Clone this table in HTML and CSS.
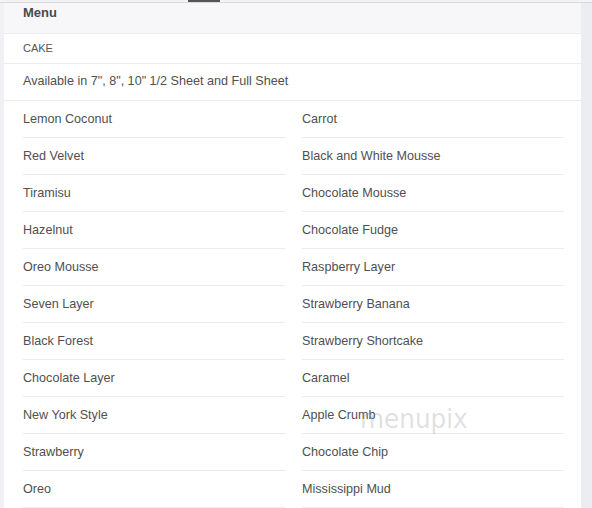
FILE: index.html
```html
<!DOCTYPE html>
<html>
<head>
<meta charset="utf-8">
<link rel="stylesheet" href="styles.css">
</head>
<body>
<div class="page">
  <div class="topbar"><span class="tab-mark"></span></div>
  <div class="main">
    <div class="card">
      <div class="head">Menu</div>
      <div class="section">CAKE</div>
      <div class="desc">Available in 7", 8", 10" 1/2 Sheet and Full Sheet</div>
      <div class="grid">
        <div class="item">Lemon Coconut</div><div class="item">Carrot</div>
        <div class="item">Red Velvet</div><div class="item">Black and White Mousse</div>
        <div class="item">Tiramisu</div><div class="item">Chocolate Mousse</div>
        <div class="item">Hazelnut</div><div class="item">Chocolate Fudge</div>
        <div class="item">Oreo Mousse</div><div class="item">Raspberry Layer</div>
        <div class="item">Seven Layer</div><div class="item">Strawberry Banana</div>
        <div class="item">Black Forest</div><div class="item">Strawberry Shortcake</div>
        <div class="item">Chocolate Layer</div><div class="item">Caramel</div>
        <div class="item">New York Style</div><div class="item">Apple Crumb</div>
        <div class="item">Strawberry</div><div class="item">Chocolate Chip</div>
        <div class="item">Oreo</div><div class="item">Mississippi Mud</div>
      </div>
    </div>
    <div class="scroll"></div>
  </div>
  <div class="watermark">menupix</div>
</div>
</body>
</html>
```
FILE: styles.css
```css
html, body { margin: 0; padding: 0; }
body {
  font-family: "Liberation Sans", Arial, sans-serif;
  background: #f1f1f4;
  color: #505050;
  width: 592px;
  height: 508px;
  overflow: hidden;
}
.page { position: relative; width: 592px; height: 508px; }
.topbar {
  height: 2px;
  border-bottom: 1px solid #d8d8de;
  background: #f3f3f6;
  position: relative;
}
.tab-mark {
  position: absolute;
  left: 188px;
  top: 0;
  width: 32px;
  height: 2px;
  background: #555;
}
.main { display: flex; padding-left: 4px; }
.card { width: 577px; background: #fff; }
.scroll { flex: 1; background: #ececf3; }
.head {
  height: 31px;
  background: #f7f7fa;
  border-bottom: 1px solid #ececf0;
  font-weight: bold;
  font-size: 13px;
  color: #4a4a4a;
  padding-left: 19px;
  line-height: 19px;
  box-sizing: border-box;
}
.section {
  height: 30px;
  font-size: 11px;
  color: #555;
  padding-left: 19px;
  line-height: 28px;
  border-bottom: 1px solid #ececf0;
  box-sizing: border-box;
}
.desc {
  height: 37px;
  font-size: 12.6px;
  color: #505050;
  padding-left: 19px;
  line-height: 35px;
  border-bottom: 1px solid #ececf0;
  box-sizing: border-box;
}
.grid {
  display: grid;
  grid-template-columns: 262px 262px;
  column-gap: 17px;
  padding: 0 19px;
}
.item {
  height: 37px;
  font-size: 12.6px;
  color: #505050;
  line-height: 36px;
  border-bottom: 1px solid #ececf0;
  box-sizing: border-box;
}
.watermark {
  position: absolute;
  left: 360px;
  top: 404px;
  font-size: 26px;
  color: rgba(150,150,150,0.3);
  font-family: "DejaVu Sans", sans-serif;
  transform: scaleX(0.95);
  transform-origin: left top;
}
```
